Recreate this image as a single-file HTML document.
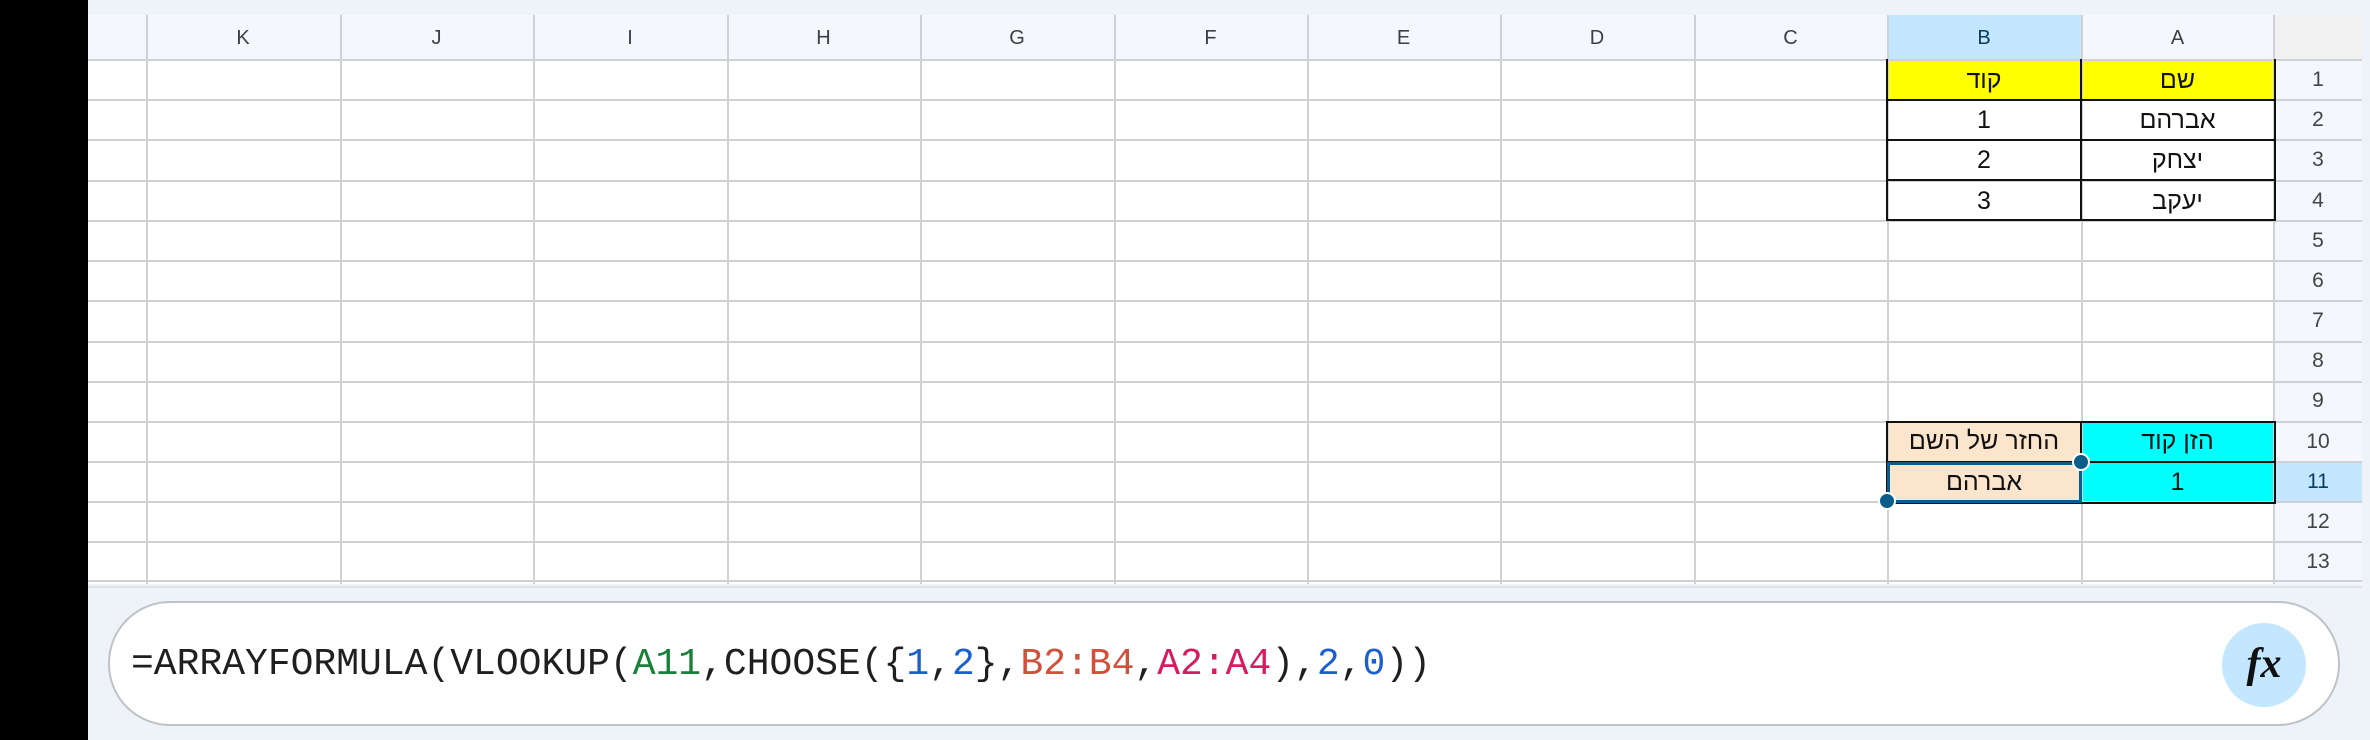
<!DOCTYPE html>
<html><head><meta charset="utf-8"><style>
*{margin:0;padding:0;box-sizing:border-box}
body{width:2370px;height:740px;background:#eef3fa;position:relative;overflow:hidden;font-family:"Liberation Sans","Noto Sans CJK SC",sans-serif}
.a{position:absolute}
.vl{position:absolute;width:2px;background:#cfd1d4}
.hl{position:absolute;height:2px;background:#cfd1d4}
.ch{position:absolute;top:15px;height:45px;line-height:47px;text-align:center;font-size:20px;color:#3c4043}
.rn{position:absolute;left:2274px;width:88px;text-align:center;font-size:21px;color:#444;height:40px;line-height:40px}
.c{position:absolute;text-align:center;font-size:25px;color:#111;line-height:40px;height:40px;direction:rtl}
</style></head><body>
<div class="a" style="left:0;top:0;width:88px;height:740px;background:#000"></div>
<div class="a" style="left:88px;top:15px;width:2186px;height:45px;background:#f4f8fe"></div>
<div class="a" style="left:1887px;top:15px;width:194px;height:45px;background:#c2e7ff"></div>
<div class="a" style="left:2274px;top:15px;width:88px;height:45px;background:#f1f1f1"></div>
<div class="a" style="left:88px;top:60px;width:2186px;height:524px;background:#fff"></div>
<div class="a" style="left:2274px;top:60px;width:88px;height:524px;background:#f4f8fe"></div>
<div class="a" style="left:2274px;top:462px;width:88px;height:40px;background:#c2e7ff"></div>
<div class="a" style="left:1887px;top:60px;width:387px;height:40px;background:#ffff00"></div>
<div class="a" style="left:1887px;top:422px;width:194px;height:80px;background:#fce5cd"></div>
<div class="a" style="left:2081px;top:422px;width:193px;height:80px;background:#00ffff"></div>
<div class="vl" style="left:146px;top:15px;height:569px"></div>
<div class="vl" style="left:340px;top:15px;height:569px"></div>
<div class="vl" style="left:533px;top:15px;height:569px"></div>
<div class="vl" style="left:727px;top:15px;height:569px"></div>
<div class="vl" style="left:920px;top:15px;height:569px"></div>
<div class="vl" style="left:1114px;top:15px;height:569px"></div>
<div class="vl" style="left:1307px;top:15px;height:569px"></div>
<div class="vl" style="left:1500px;top:15px;height:569px"></div>
<div class="vl" style="left:1694px;top:15px;height:569px"></div>
<div class="vl" style="left:1887px;top:15px;height:569px"></div>
<div class="vl" style="left:2081px;top:15px;height:569px"></div>
<div class="vl" style="left:2273px;top:15px;height:569px"></div>
<div class="hl" style="left:88px;top:59px;width:2274px"></div>
<div class="hl" style="left:88px;top:99px;width:2274px"></div>
<div class="hl" style="left:88px;top:139px;width:2274px"></div>
<div class="hl" style="left:88px;top:180px;width:2274px"></div>
<div class="hl" style="left:88px;top:220px;width:2274px"></div>
<div class="hl" style="left:88px;top:260px;width:2274px"></div>
<div class="hl" style="left:88px;top:300px;width:2274px"></div>
<div class="hl" style="left:88px;top:341px;width:2274px"></div>
<div class="hl" style="left:88px;top:381px;width:2274px"></div>
<div class="hl" style="left:88px;top:421px;width:2274px"></div>
<div class="hl" style="left:88px;top:461px;width:2274px"></div>
<div class="hl" style="left:88px;top:501px;width:2274px"></div>
<div class="hl" style="left:88px;top:541px;width:2274px"></div>
<div class="hl" style="left:88px;top:580px;width:2274px"></div>
<div class="hl" style="left:88px;top:586px;width:2274px;background:#dfe3e8"></div>
<div class="a" style="left:1886px;top:59px;width:390px;height:162px;border:2px solid #111;border-top:none"></div>
<div class="a" style="left:1886px;top:99px;width:390px;height:2px;background:#111"></div>
<div class="a" style="left:1886px;top:139px;width:390px;height:2px;background:#111"></div>
<div class="a" style="left:1886px;top:179px;width:390px;height:2px;background:#111"></div>
<div class="a" style="left:2080px;top:59px;width:2px;height:162px;background:#111"></div>
<div class="a" style="left:1886px;top:421px;width:390px;height:83px;border:2px solid #111"></div>
<div class="a" style="left:1886px;top:461px;width:390px;height:2px;background:#111"></div>
<div class="a" style="left:2080px;top:421px;width:2px;height:82px;background:#111"></div>
<div class="a" style="left:1887px;top:462px;width:195px;height:41px;border:3px solid #0b5d8a"></div>
<div class="a" style="left:2072px;top:453px;width:18px;height:18px;border-radius:50%;background:#0b5d8a;border:2px solid #fff"></div>
<div class="a" style="left:1878px;top:492px;width:18px;height:18px;border-radius:50%;background:#0b5d8a;border:2px solid #fff"></div>
<div class="ch" style="left:146px;width:194px">K</div>
<div class="ch" style="left:340px;width:193px">J</div>
<div class="ch" style="left:533px;width:194px">I</div>
<div class="ch" style="left:727px;width:193px">H</div>
<div class="ch" style="left:920px;width:194px">G</div>
<div class="ch" style="left:1114px;width:193px">F</div>
<div class="ch" style="left:1307px;width:193px">E</div>
<div class="ch" style="left:1500px;width:194px">D</div>
<div class="ch" style="left:1694px;width:193px">C</div>
<div class="ch" style="left:1887px;width:194px;color:#0b3b60">B</div>
<div class="ch" style="left:2081px;width:193px">A</div>
<div class="rn" style="top:60px">1</div><div class="rn" style="top:100px">2</div><div class="rn" style="top:140px">3</div><div class="rn" style="top:181px">4</div><div class="rn" style="top:221px">5</div><div class="rn" style="top:261px">6</div><div class="rn" style="top:301px">7</div><div class="rn" style="top:341px">8</div><div class="rn" style="top:381px">9</div><div class="rn" style="top:422px">10</div><div class="rn" style="top:462px;color:#0b3b60">11</div><div class="rn" style="top:502px">12</div><div class="rn" style="top:542px">13</div>
<div class="c" style="left:1887px;width:194px;top:60px">קוד</div>
<div class="c" style="left:2081px;width:193px;top:60px">שם</div>
<div class="c" style="left:1887px;width:194px;top:100px">1</div>
<div class="c" style="left:2081px;width:193px;top:100px">אברהם</div>
<div class="c" style="left:1887px;width:194px;top:140px">2</div>
<div class="c" style="left:2081px;width:193px;top:140px">יצחק</div>
<div class="c" style="left:1887px;width:194px;top:181px">3</div>
<div class="c" style="left:2081px;width:193px;top:181px">יעקב</div>
<div class="c" style="left:1887px;width:194px;top:421px">החזר של השם</div>
<div class="c" style="left:2081px;width:193px;top:421px">הזן קוד</div>
<div class="c" style="left:1887px;width:194px;top:462px">אברהם</div>
<div class="c" style="left:2081px;width:193px;top:462px">1</div>
<div class="a" style="left:108px;top:601px;width:2232px;height:125px;background:#fff;border:2px solid #bfc2c7;border-radius:62px"></div>
<div class="a" style="left:131px;top:640px;font-family:'Liberation Mono',monospace;font-size:38px;line-height:50px;color:#1f1f1f;white-space:pre">=ARRAYFORMULA(VLOOKUP(<span style="color:#188038">A11</span>,CHOOSE({<span style="color:#1a5fd0">1</span>,<span style="color:#1a5fd0">2</span>},<span style="color:#d2503a">B2:B4</span>,<span style="color:#d81b60">A2:A4</span>),<span style="color:#1a5fd0">2</span>,<span style="color:#1a5fd0">0</span>))</div>
<div class="a" style="left:2222px;top:623px;width:84px;height:84px;border-radius:50%;background:#c2e7ff;text-align:center;line-height:82px;font-family:'Liberation Serif',serif;font-style:italic;font-weight:bold;font-size:42px;color:#111">fx</div>
</body></html>
